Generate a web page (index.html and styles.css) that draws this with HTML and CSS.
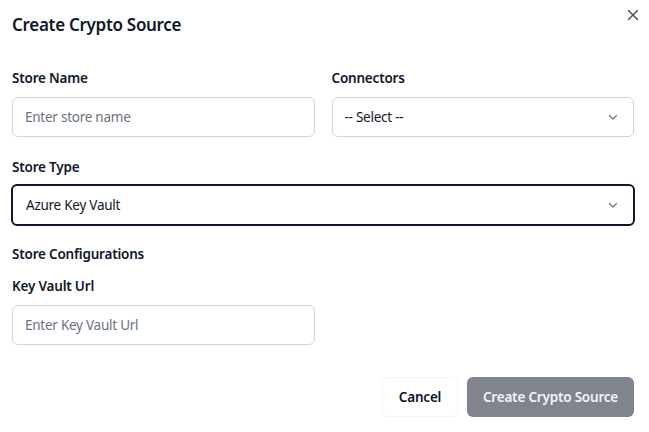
FILE: index.html
```html
<!DOCTYPE html>
<html lang="en">
<head>
<meta charset="utf-8">
<link rel="stylesheet" href="styles.css">
</head>
<body>
<div class="dialog">
  <div class="header">
    <h2 class="title">Create Crypto Source</h2>
    <button class="close" aria-label="Close">
      <svg width="12" height="12" viewBox="0 0 12 12"><path d="M1.5 1.5 L10.5 10.5 M10.5 1.5 L1.5 10.5" stroke="#475569" stroke-width="1.5" stroke-linecap="round" fill="none"/></svg>
    </button>
  </div>
  <div class="grid">
    <div class="field">
      <label class="label">Store Name</label>
      <div class="input placeholder">Enter store name</div>
    </div>
    <div class="field">
      <label class="label">Connectors</label>
      <div class="input select"><span>-- Select --</span>
        <svg class="chev" width="12" height="12" viewBox="0 0 12 12"><path d="M2.5 4.5 L6 8 L9.5 4.5" stroke="#64748b" stroke-width="1.2" fill="none" stroke-linecap="round" stroke-linejoin="round"/></svg>
      </div>
    </div>
  </div>
  <div class="field full">
    <label class="label">Store Type</label>
    <div class="input select focused"><span>Azure Key Vault</span>
      <svg class="chev" width="12" height="12" viewBox="0 0 12 12"><path d="M2.5 4.5 L6 8 L9.5 4.5" stroke="#64748b" stroke-width="1.2" fill="none" stroke-linecap="round" stroke-linejoin="round"/></svg>
    </div>
  </div>
  <div class="section">Store Configurations</div>
  <div class="grid">
    <div class="field">
      <label class="label">Key Vault Url</label>
      <div class="input placeholder">Enter Key Vault Url</div>
    </div>
  </div>
  <div class="footer">
    <button class="btn cancel">Cancel</button>
    <button class="btn primary">Create Crypto Source</button>
  </div>
</div>
</body>
</html>
```
FILE: styles.css
```css
* { box-sizing: border-box; }
html, body { margin: 0; padding: 0; background: #fff; }
body {
  font-family: "Noto Sans", "Open Sans", sans-serif;
  color: #0f172a;
  width: 649px;
  height: 432px;
  overflow: hidden;
}
.dialog {
  padding: 12px 15px 0 12px;
}
.header {
  display: flex;
  justify-content: space-between;
  align-items: flex-start;
  height: 56px;
}
.title {
  margin: 1px 0 0 0;
  font-size: 17px;
  font-weight: 600;
  line-height: 24px;
  letter-spacing: -0.3px;
}
.close {
  border: none;
  background: none;
  padding: 0;
  margin: -3px -5px 0 0;
  width: 12px;
  height: 12px;
  display: flex;
}
.grid {
  display: grid;
  grid-template-columns: 1fr 1fr;
  column-gap: 17px;
}
.field { display: flex; flex-direction: column; }
.label {
  font-size: 13.5px;
  font-weight: 600;
  line-height: 20px;
  height: 20px;
  margin-bottom: 9px;
  letter-spacing: -0.2px;
}
.input {
  height: 40px;
  border: 1px solid #cbd5e1;
  border-radius: 6px;
  padding: 0 12px;
  display: flex;
  align-items: center;
  font-size: 13.5px;
  letter-spacing: -0.25px;
  color: #0f172a;
}
.placeholder { color: #6b7280; }
.select { justify-content: space-between; }
.chev { margin-right: 2px; }
.full { margin-top: 20px; }
.focused {
  height: 42px;
  margin-left: -1px;
  margin-top: -2px;
  margin-right: -1px;
  border: 2px solid #0f172a;
  padding-left: 13px;
}
.section {
  margin-top: 18px;
  font-size: 13.5px;
  font-weight: 600;
  line-height: 20px;
  letter-spacing: -0.2px;
  margin-bottom: 12px;
}
.footer {
  display: flex;
  justify-content: flex-end;
  gap: 9px;
  margin-top: 32px;
}
.btn {
  height: 40px;
  border-radius: 6px;
  font-family: inherit;
  font-size: 13.5px;
  font-weight: 600;
  letter-spacing: -0.2px;
  padding: 0;
  white-space: nowrap;
}
.cancel {
  background: #fff;
  border: 1px solid #f1f5f9;
  color: #0f172a;
  width: 76px;
}
.primary {
  background: #7f848d;
  border: none;
  color: #f1f5f9;
  width: 167px;
}
```
